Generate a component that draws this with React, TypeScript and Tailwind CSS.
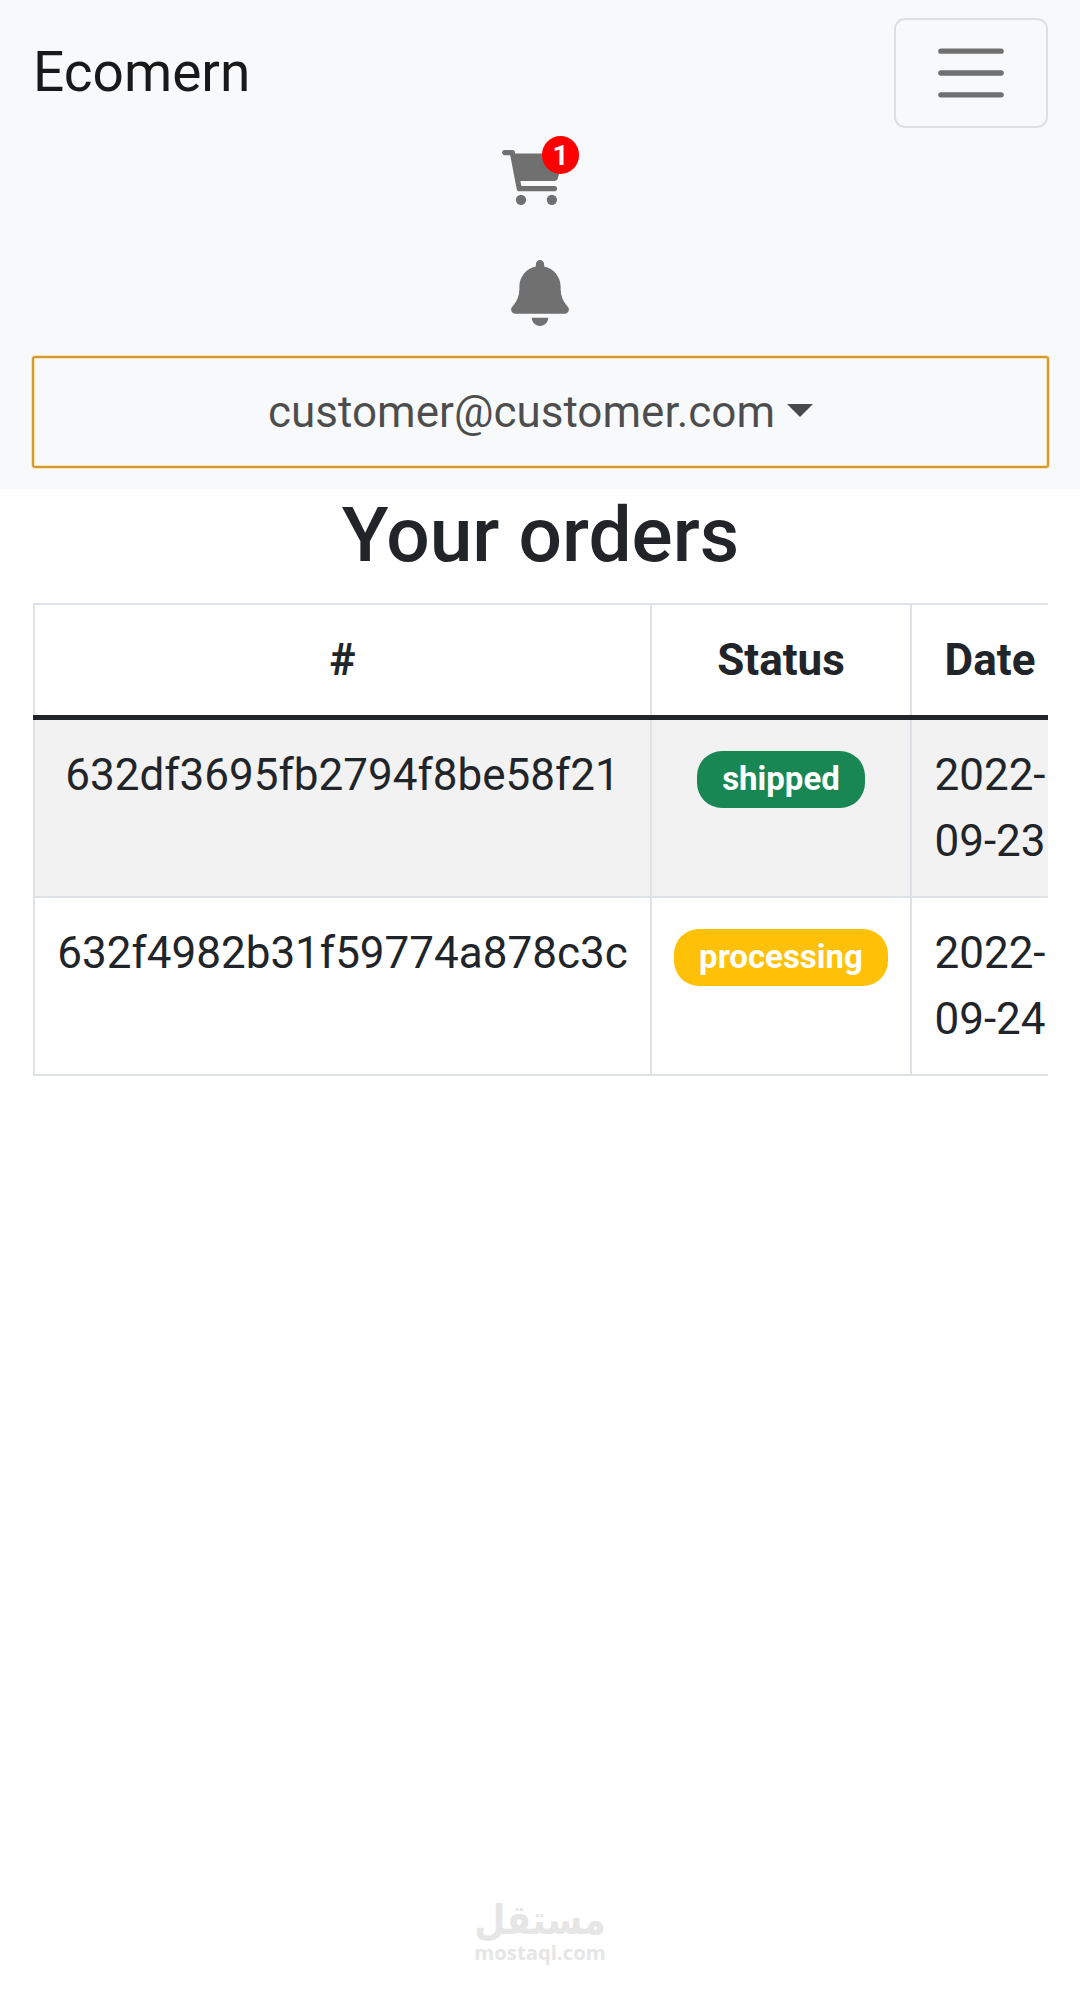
import clsx from "clsx";

type OrderStatus = "shipped" | "processing";

type Order = {
  id: string;
  status: OrderStatus;
  date: string[];
};

const orders: Order[] = [
  {
    id: "632df3695fb2794f8be58f21",
    status: "shipped",
    date: ["2022-", "09-23"],
  },
  {
    id: "632f4982b31f59774a878c3c",
    status: "processing",
    date: ["2022-", "09-24"],
  },
];

const statusColors: Record<OrderStatus, string> = {
  shipped: "bg-[#198754]",
  processing: "bg-[#ffc107]",
};

function CartIcon() {
  return (
    <svg viewBox="0 0 576 512" fill="currentColor" className="h-[55px] w-[62px]">
      <path d="M96 0C107.5 0 117.4 8.19 119.6 19.51L121.1 32H541.8C562.1 32 578.3 52.25 572.6 72.66L518.6 264.7C514.7 278.5 502.1 288 487.8 288H170.7L179.9 336H488C501.3 336 512 346.7 512 360C512 373.3 501.3 384 488 384H159.1C148.5 384 138.6 375.8 136.4 364.5L76.14 48H24C10.75 48 0 37.25 0 24C0 10.75 10.75 0 24 0H96z" />
      <circle cx="176" cy="464" r="48" />
      <circle cx="464" cy="464" r="48" />
    </svg>
  );
}

function BellIcon() {
  return (
    <svg viewBox="0 0 448 512" fill="currentColor" className="h-[66px] w-[58px]">
      <path d="M256 32V51.2C329 66.03 384 130.6 384 208V226.8C384 273.9 401.3 319.2 432.5 354.4L439.9 362.7C448.3 372.2 450.4 385.6 445.2 397.1C440 408.6 428.6 416 416 416H32C19.4 416 7.97 408.6 2.81 397.1C-2.35 385.6-.29 372.2 8.08 362.7L15.5 354.4C46.74 319.2 64 273.9 64 226.8V208C64 130.6 118.1 66.03 192 51.2V32C192 14.33 206.3 0 224 0C241.7 0 256 14.33 256 32zM224 512C207 512 190.7 505.3 178.7 493.3C166.7 481.3 160 464.1 160 448H288C288 464.1 281.3 481.3 269.3 493.3C257.3 505.3 240.1 512 224 512z" />
    </svg>
  );
}

function Navbar() {
  return (
    <nav className="h-[489px] bg-[#f8f9fa] pr-[31px] pl-8 pt-[18px]">
      <div className="flex h-[110px] items-center justify-between pr-px pl-px">
        <a className="-mt-0.5 text-[55px] leading-none text-black/90">
          Ecomern
        </a>
        <button
          aria-label="Toggle navigation"
          className="flex h-[110px] w-[154px] items-center justify-center rounded-[11px] border-2 border-black/10 pr-px"
        >
          <svg viewBox="0 0 30 30" className="size-[82px]">
            <path
              d="M4 7h22M4 15h22M4 23h22"
              stroke="rgba(0,0,0,.55)"
              strokeLinecap="round"
              strokeWidth="2"
            />
          </svg>
        </button>
      </div>

      <div className="flex flex-col items-center">
        {/* Cart */}
        <a className="relative mt-[22px] mr-[15px] block text-[#707071]">
          <CartIcon />
          <span className="absolute -top-[14px] left-[40px] flex h-[38px] w-[37px] items-center justify-center rounded-full bg-[#ff0000] pt-px text-[28px] leading-none font-bold text-white">
            1
          </span>
        </a>

        {/* Notifications */}
        <a className="mt-[55px] mr-px block text-[#707071]">
          <BellIcon />
        </a>

        {/* User dropdown */}
        <a className="mt-[30px] flex h-28 w-full items-center justify-center rounded-[3px] border-2 border-[#d49a32] text-[44px] leading-[66px] text-black/70 shadow-[0_0_0_1px_#fbe3ae,inset_0_0_0_1px_#fbe3ae]">
          customer@customer.com
          <span className="-mt-1 ml-3 border-x-[13px] border-t-[13px] border-x-transparent border-t-black/70" />
        </a>
      </div>
    </nav>
  );
}

function StatusBadge({ status }: { status: OrderStatus }) {
  return (
    <span
      className={clsx(
        "mt-px inline-block rounded-[25px] px-[25px] pt-[11px] pb-[13px] text-[33px] leading-[33px] font-bold text-white",
        statusColors[status]
      )}
    >
      {status}
    </span>
  );
}

function OrdersTable() {
  return (
    <div className="ml-[33px] w-[1015px] overflow-hidden">
      <table className="w-[1037px] table-fixed border-separate border-spacing-0 text-center text-[44px] leading-[66px]">
        <colgroup>
          <col className="w-[619px]" />
          <col className="w-[260px]" />
          <col className="w-[158px]" />
        </colgroup>
        <thead>
          <tr>
            <th className="border-x-2 border-t-2 border-[#dee2e6] py-[22px] font-bold">
              #
            </th>
            <th className="border-t-2 border-r-2 border-[#dee2e6] py-[22px] font-bold">
              Status
            </th>
            <th className="border-t-2 border-r-2 border-[#dee2e6] py-[22px] font-bold">
              Date
            </th>
          </tr>
          <tr>
            <td colSpan={3} className="h-[5px] bg-[#212529] p-0" />
          </tr>
        </thead>
        <tbody>
          {orders.map((order) => (
            <tr key={order.id} className="align-top odd:bg-[#f2f2f2]">
              <td className="border-x-2 border-b-2 border-[#dee2e6] py-[22px]">
                {order.id}
              </td>
              <td className="h-[178px] border-r-2 border-b-2 border-[#dee2e6] pt-[22px]">
                <StatusBadge status={order.status} />
              </td>
              <td className="border-r-2 border-b-2 border-[#dee2e6] py-[22px]">
                {order.date.map((part) => (
                  <div key={part}>{part}</div>
                ))}
              </td>
            </tr>
          ))}
        </tbody>
      </table>
    </div>
  );
}

function Watermark() {
  return (
    <footer className="mt-auto flex h-[106px] flex-col items-center text-[#e6e6e6]">
      <span
        dir="rtl"
        className="h-[42px] origin-center scale-y-[1.15] pt-px font-['DejaVu_Sans',sans-serif] text-[36px] leading-[42px] font-bold"
      >
        مستقل
      </span>
      <span className="font-['Open_Sans',sans-serif] text-[20.3px] leading-6 font-bold">
        mostaql.com
      </span>
    </footer>
  );
}

export default function App() {
  return (
    <main className="flex h-[2004px] w-[1080px] flex-col overflow-hidden bg-white font-['Roboto',sans-serif] text-[#212529]">
      <Navbar />
      <h1 className="mb-[22px] pl-px text-center text-[76.7px] leading-[92px] font-medium">
        Your orders
      </h1>
      <OrdersTable />
      <Watermark />
    </main>
  );
}
